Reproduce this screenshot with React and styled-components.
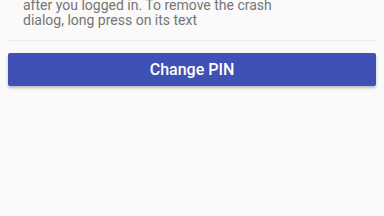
import styled, { createGlobalStyle } from "styled-components";

const GlobalStyle = createGlobalStyle`
   html, body {
      margin: 0;
      padding: 0;
      background: #fafafa;
      overflow: hidden;
   }
   body {
      font-family: Roboto, "Noto Sans", sans-serif;
   }
`

const Screen = styled.div`
   width: 384px;
   height: 216px;
   background: #fafafa;
   overflow: hidden;
`

const Hint = styled.p`
   margin: -2px 0 0 0;
   padding: 0 23px 12px 23px;
   font-size: 14px;
   line-height: 15px;
   color: #757575;
`

const Divider = styled.div`
   margin: 0 8px;
   height: 1px;
   background: #ececec;
`

const PinButton = styled.button`
   display: block;
   width: 368px;
   height: 33px;
   margin: 12px 8px 0 8px;
   border: none;
   border-radius: 2px;
   background: #3f51b5;
   color: #ffffff;
   font-family: Roboto, sans-serif;
   font-weight: 500;
   font-size: 16px;
   box-shadow: 0 2px 3px rgba(0, 0, 0, 0.25);
   cursor: pointer;
`

export default function App() {
   return (
      <Screen>
         <GlobalStyle />
         <Hint>
            after you logged in. To remove the crash
            <br />
            dialog, long press on its text
         </Hint>
         <Divider />
         <PinButton>Change PIN</PinButton>
      </Screen>
   );
}
